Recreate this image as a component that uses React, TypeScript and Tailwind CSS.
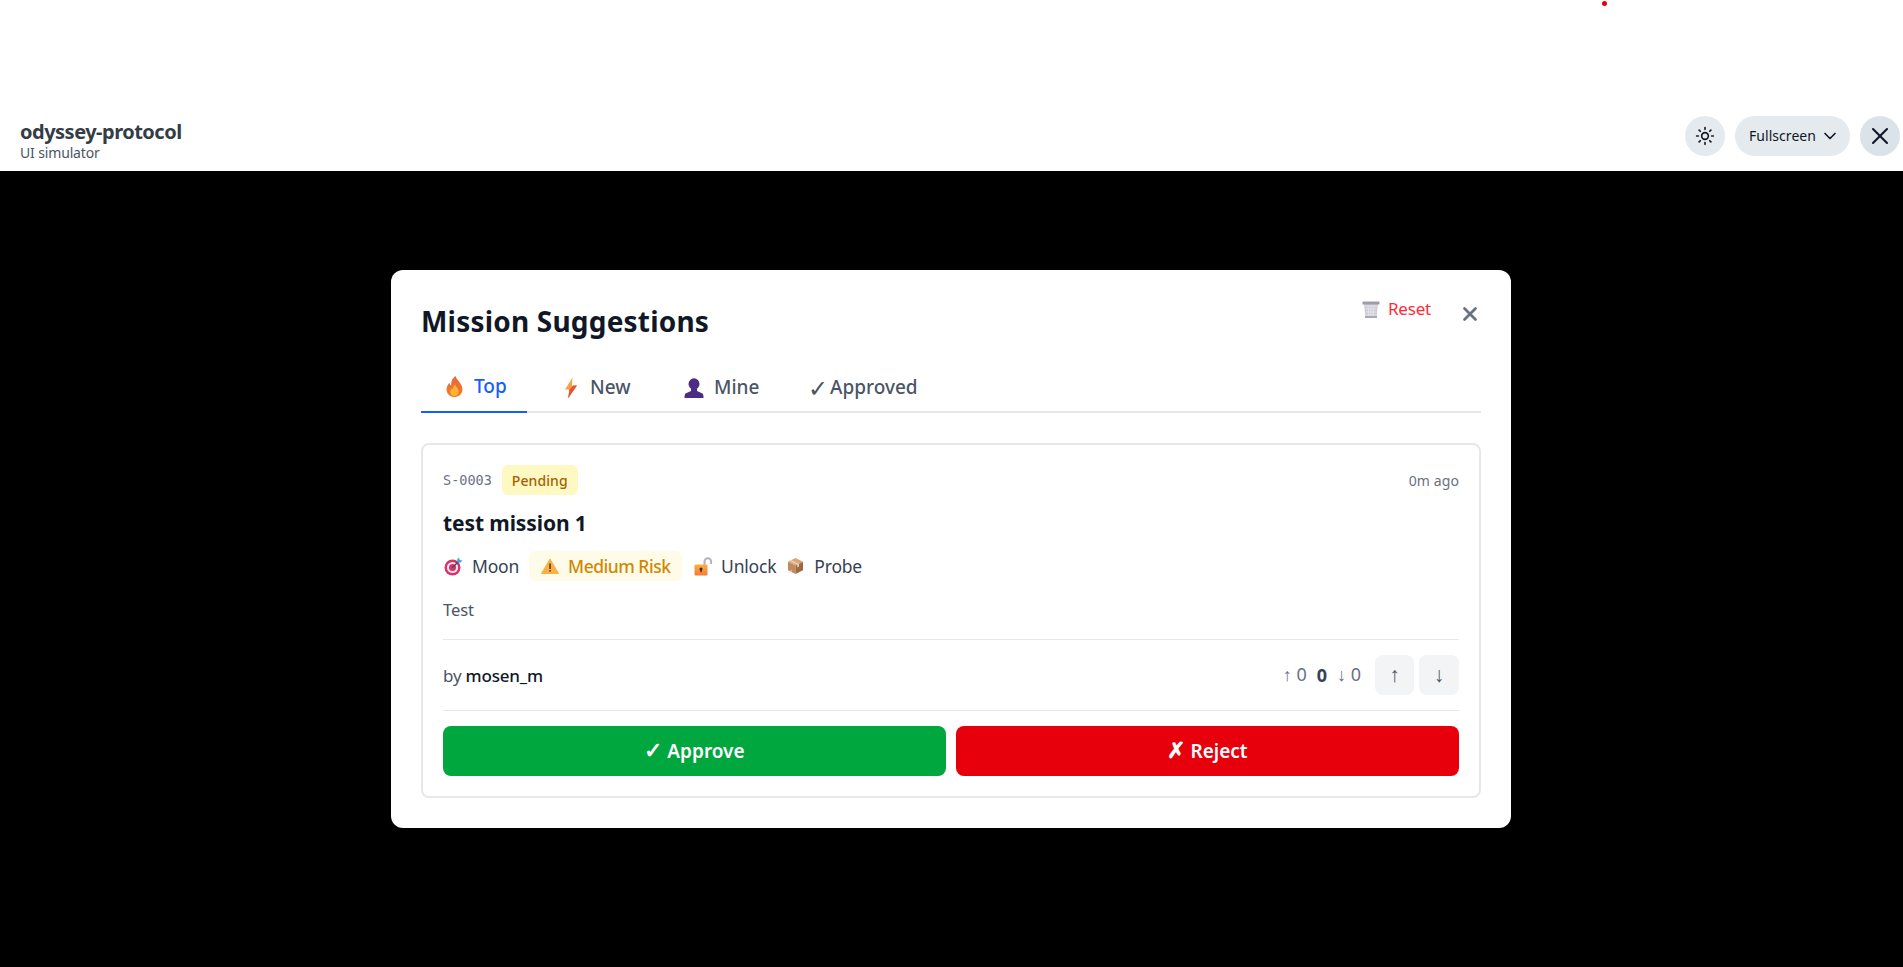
import { Sun, ChevronDown, X } from "lucide-react";

const Flame = () => (
  <svg width="19" height="23" viewBox="0 0 18 22" className="shrink-0">
    <defs>
      <linearGradient id="fl" x1="0" y1="0" x2="0" y2="1">
        <stop offset="0" stopColor="#e8663c" />
        <stop offset="1" stopColor="#f47b2a" />
      </linearGradient>
    </defs>
    <path d="M10 1c.6 3 3 4.500 4.500 7 1.700 2.700 2.500 4.500 2 7-.6 3.500-3.700 6-7.500 6s-7-2.500-7.500-6c-.4-3 1-5.500 2.500-7.500.3 1.200.8 2 1.800 2.500C5.500 6 7 3 10 1z" fill="url(#fl)" />
    <path d="M9.500 9c.5 2 3.500 3.500 3.500 7 0 2.500-1.800 4-4 4s-4-1.500-4-4c0-1.500.7-2.700 1.500-3.500.2.800.5 1.200 1 1.500C7.300 12 8 10 9.500 9z" fill="#fdb52e" />
  </svg>
);
const Bolt = () => (
  <svg width="14" height="22" viewBox="0 0 14 22" className="shrink-0">
    <path d="M8.500 0.500 1 12.500h4.500L4 21.500 13 8.500H8z" fill="#f9a04a" />
    <path d="M5.500 12.500 4 21.500 13 8.500H9.500z" fill="#e8503a" />
  </svg>
);
const Bust = () => (
  <svg width="20" height="20" viewBox="0 0 20 20" className="shrink-0">
    <ellipse cx="10" cy="6" rx="5.500" ry="5.800" fill="#4b2d83" />
    <path d="M7 10.500h6v2.500l5 2.200c1.200.6 1.500 1.800 1.500 4.800H.5c0-3 .3-4.200 1.500-4.800L7 13z" fill="#4b2d83" />
  </svg>
);
const Target = () => (
  <svg width="19" height="19" viewBox="0 0 19 19" className="shrink-0">
    <circle cx="8.500" cy="10.500" r="8" fill="#d7336b" />
    <circle cx="8.500" cy="10.500" r="5.600" fill="#f5e6ea" />
    <circle cx="8.500" cy="10.500" r="3.500" fill="#d7336b" />
    <path d="M8.500 10.500 15 4" stroke="#3a4a5a" strokeWidth="1.200" />
    <path d="M13 2.500 15 .5l.8 2.400 2.700.6-2.300 2.300-2.700-.6z" fill="#3fa9e8" />
  </svg>
);
const Warn = () => (
  <svg width="18" height="16" viewBox="0 0 18 16" className="shrink-0">
    <path d="M9 1 17.500 15.500H.5z" fill="#fbb045" stroke="#fbb045" strokeLinejoin="round" />
    <rect x="8.300" y="5.500" width="1.500" height="5.500" fill="#4a3b22" />
    <rect x="8.300" y="12" width="1.500" height="1.600" fill="#4a3b22" />
  </svg>
);
const Unlock = () => (
  <svg width="19" height="19" viewBox="0 0 19 19" className="shrink-0">
    <path d="M10.500 8V4.500a3.300 3.300 0 0 1 6.600 0V7" fill="none" stroke="#b9aebf" strokeWidth="2" />
    <defs>
      <linearGradient id="lk" x1="0" y1="0" x2="0" y2="1">
        <stop offset="0" stopColor="#fbb03b" />
        <stop offset="1" stopColor="#f47b3a" />
      </linearGradient>
    </defs>
    <rect x="0.500" y="7.500" width="13" height="11" rx="1.200" fill="url(#lk)" />
    <circle cx="7" cy="12" r="1.500" fill="#3a2a20" />
    <rect x="6.300" y="12" width="1.400" height="3.200" fill="#3a2a20" />
  </svg>
);
const Box = () => (
  <svg width="17" height="18" viewBox="0 0 17 18" className="shrink-0">
    <path d="M8.500 1 16 4.800 8.500 8.600 1 4.800z" fill="#d9a678" />
    <path d="M1 4.800 8.500 8.600V17L1 13.200z" fill="#c08a5c" />
    <path d="M16 4.800 8.500 8.600V17l7.500-3.800z" fill="#9c6b45" />
    <path d="M4.200 3 12 6.900v2.600l-1.800.9V7.800L2.500 3.900z" fill="#ecd0ae" />
    <circle cx="4" cy="14" r="1" fill="#d5c1d8" />
  </svg>
);
const Trash = () => (
  <svg width="18" height="17" viewBox="0 0 18 17" className="shrink-0">
    <path d="M2 3h14l-1.500 13.500h-11z" fill="#cdcbd6" />
    <path d="M3 5h12M3.500 8h11M4 11h10M4 14h10M6 4l1 12M9 4v12M12 4l-1 12" stroke="#e9e8ee" strokeWidth="0.800" />
    <rect x="0.500" y="0.500" width="17" height="3" rx="0.500" fill="#9f9dab" />
    <rect x="3" y="15" width="12" height="2" fill="#a9a7b4" />
  </svg>
);

export default function App() {
  return (
    <div className="relative flex h-[967px] w-full flex-col overflow-hidden bg-black font-['Noto_Sans',sans-serif]">
      <span className="absolute left-[1602px] top-[1px] h-[5px] w-[5px] rounded-full bg-red-600" />
      <header className="flex h-[171px] shrink-0 items-end justify-between bg-white pb-[15px] pl-5 pr-[3px]">
        <div className="mb-[-6px] flex flex-col">
          <div className="text-[20px] font-bold leading-[24px] text-[#343d45] tracking-[-0.5px]">odyssey-protocol</div>
          <div className="text-[14px] leading-[18px] text-[#4b5563] tracking-[-0.15px]">UI simulator</div>
        </div>
        <div className="flex items-center gap-[10px]">
          <button className="flex h-10 w-10 items-center justify-center rounded-full bg-[#e5eaee] text-gray-900">
            <Sun size={20} />
          </button>
          <button className="flex h-10 w-[115px] items-center justify-between rounded-full bg-[#e5eaee] pl-[14px] pr-[10px] text-[14px] text-gray-900">
            <span className="-mt-[2px] tracking-[0.05px]">Fullscreen</span>
            <ChevronDown size={20} strokeWidth={2} />
          </button>
          <button className="flex h-10 w-10 items-center justify-center rounded-full bg-[#dce3e8] text-gray-900">
            <X size={28} strokeWidth={1.8} />
          </button>
        </div>
      </header>
      <main className="flex flex-1 justify-center pt-[99px] pr-[1px]">
        <div className="flex h-[558px] w-[1120px] flex-col rounded-xl bg-white p-[30px] pt-0">
          <div className="flex h-[92px] items-start justify-between">
            <h2 className="mt-[30px] text-[28px] font-bold leading-[42px] tracking-[0.2px] text-gray-900">Mission Suggestions</h2>
            <div className="flex items-start">
              <button className="mt-[28px] flex items-center gap-2 text-[17px] leading-[22px] text-red-500">
                <Trash />
                <span className="tracking-[-0.2px]">Reset</span>
              </button>
              <X size={22} strokeWidth={3} className="ml-[28px] mt-[33px] text-gray-500" />
            </div>
          </div>
          <div className="flex h-[51px] items-start gap-4 border-b-2 border-gray-200">
            <div className="flex h-[51px] w-[106px] items-center gap-2 border-b-2 border-blue-600 pl-6 text-[19px] font-medium text-blue-600">
              <Flame />
              <span className="ml-[2px]">Top</span>
            </div>
            <div className="flex h-[51px] w-[107px] items-center gap-2 pl-[21px] text-[19px] font-medium text-gray-600">
              <Bolt />
              <span className="ml-[4px]">New</span>
            </div>
            <div className="flex h-[51px] w-[115px] items-center gap-[10px] pl-[18px] text-[19px] font-medium text-gray-600">
              <Bust />
              <span>Mine</span>
            </div>
            <div className="flex h-[51px] items-center pl-[11px] text-[19px] font-medium text-gray-600">
              <span className="mr-[2px] text-[24px] leading-none">✓</span>Approved
            </div>
          </div>
          <div className="mt-[30px] flex flex-1 flex-col rounded-lg border-2 border-gray-200 px-5 pt-5">
            <div className="flex h-[30px] items-center justify-between">
              <div className="flex items-center gap-[10px]">
                <span className="font-['DejaVu_Sans_Mono',monospace] text-[13.500px] text-gray-500">S-0003</span>
                <span className="flex h-[30px] items-center rounded-md bg-yellow-100 px-[10px] text-[14px] font-medium tracking-[0.1px] text-yellow-700">Pending</span>
              </div>
              <span className="text-[14px] tracking-[0.1px] text-gray-500">0m ago</span>
            </div>
            <h3 className="mt-[13px] text-[21px] font-bold leading-[30px] tracking-[-0.1px] text-gray-900">test mission 1</h3>
            <div className="mt-[13px] flex h-[30px] items-center text-[17.500px] tracking-[-0.2px] text-gray-700">
              <span className="ml-[1px] flex items-center gap-[9px]"><Target />Moon</span>
              <span className="ml-[10px] flex h-[30px] w-[153px] items-center gap-[9px] rounded-md bg-yellow-50 pl-[12px] font-medium tracking-[-0.5px] text-yellow-600"><Warn />Medium Risk</span>
              <span className="ml-[12px] flex items-center gap-[8px]"><Unlock />Unlock</span>
              <span className="ml-[11px] flex items-center gap-[10px]"><Box />Probe</span>
            </div>
            <p className="mt-[17px] text-[16.500px] leading-[24px] tracking-[-0.1px] text-gray-600">Test</p>
            <div className="mt-[17px] flex h-[72px] items-center justify-between border-y border-y-gray-200">
              <div className="pt-[1px] text-[17px] tracking-[-0.2px] text-gray-600">by <span className="font-medium text-gray-900">mosen_m</span></div>
              <div className="flex items-center">
                <span className="text-[18px] text-gray-500"><span className="font-['Liberation_Sans',sans-serif] text-[18px]">↑</span> 0</span>
                <span className="ml-[10px] text-[18px] font-bold text-gray-700">0</span>
                <span className="ml-[10px] text-[18px] text-gray-500"><span className="font-['Liberation_Sans',sans-serif] text-[18px]">↓</span> 0</span>
                <button className="ml-[14px] h-10 w-[39px] rounded-lg bg-gray-100 font-['Liberation_Sans',sans-serif] text-[21px] text-gray-600">↑</button>
                <button className="ml-[5px] h-10 w-10 rounded-lg bg-gray-100 font-['Liberation_Sans',sans-serif] text-[21px] text-gray-600">↓</button>
              </div>
            </div>
            <div className="mt-[15px] flex gap-[10px]">
              <button className="h-[50px] flex-1 rounded-lg bg-green-600 pt-[1px] text-[19px] font-semibold text-white"><span className="text-[22px] leading-none">✓</span> Approve</button>
              <button className="h-[50px] flex-1 rounded-lg bg-red-600 pt-[1px] text-[19px] font-semibold text-white"><span className="text-[22px] leading-none">✗</span> Reject</button>
            </div>
          </div>
        </div>
      </main>
    </div>
  );
}
